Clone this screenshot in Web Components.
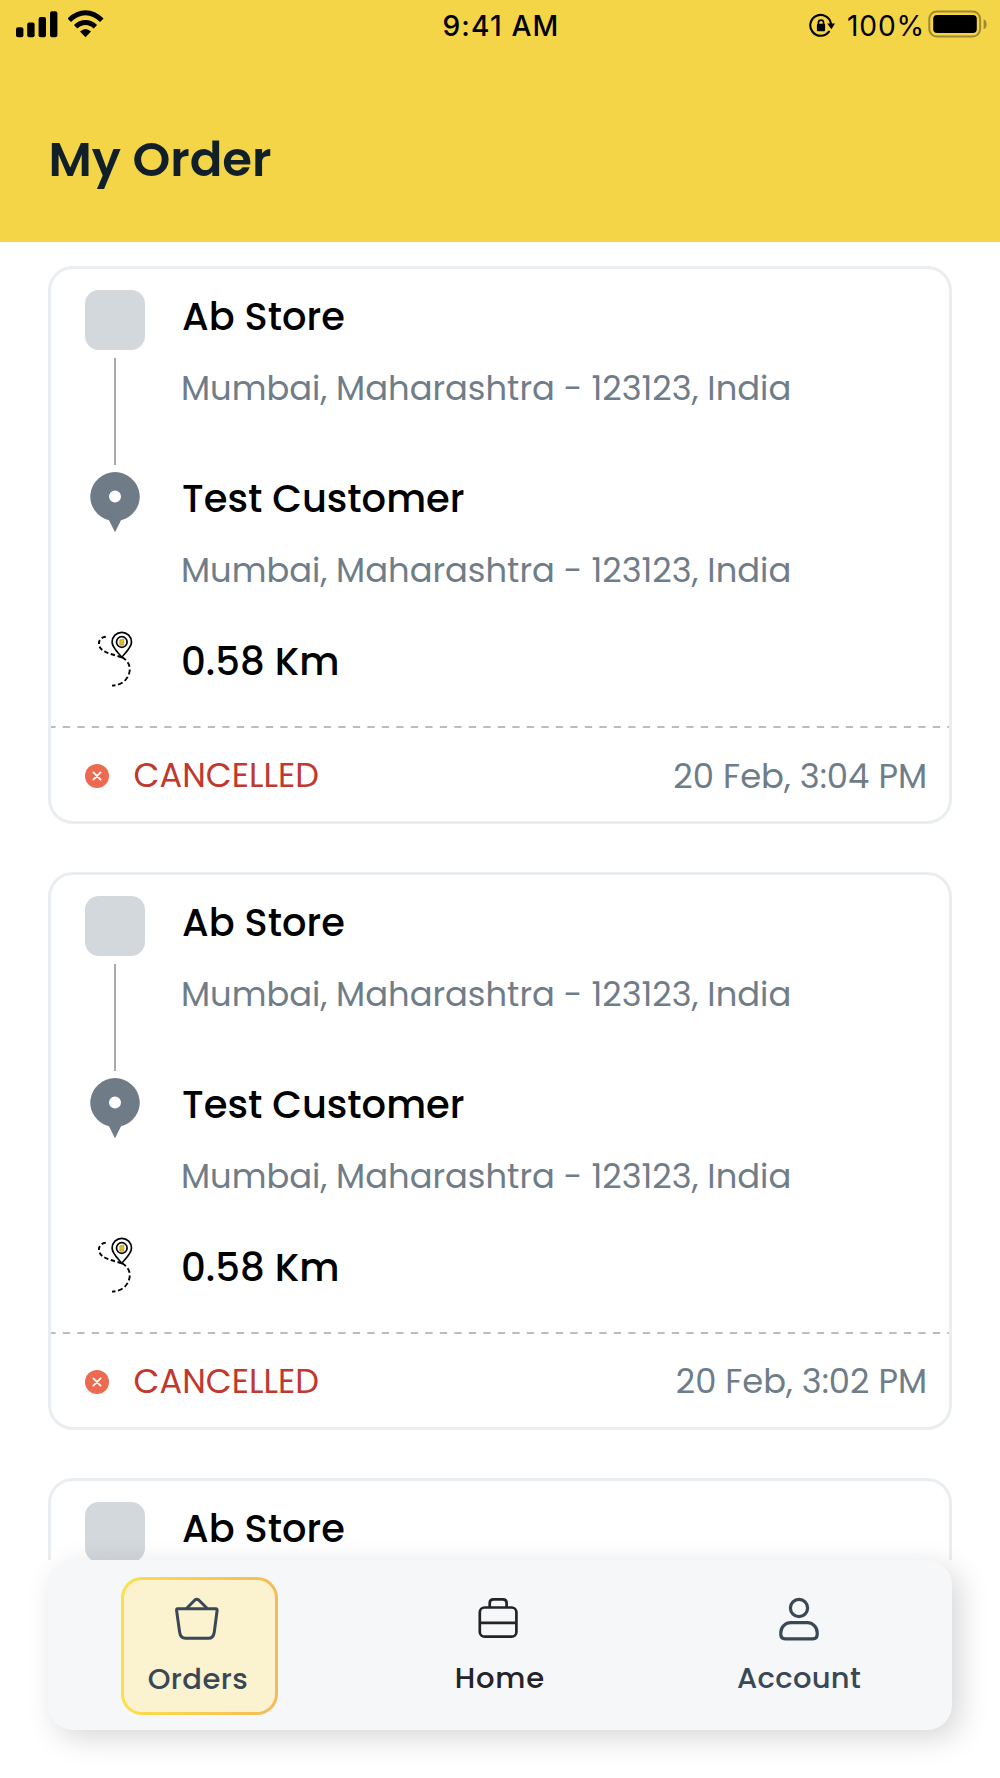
<!DOCTYPE html>
<html lang="en">
<head>
<meta charset="utf-8">
<title>My Order</title>
<style>
html,body{margin:0;padding:0;background:#fff}
body{width:1000px;height:1778px;overflow:hidden;font-family:Poppins,Inter,"Liberation Sans",sans-serif}
</style>
</head>
<body>
<orders-screen></orders-screen>
<script>
const define = (name, html, setup) => {
  const tpl = document.createElement('template');
  tpl.innerHTML = html;
  customElements.define(name, class extends HTMLElement {
    connectedCallback() {
      if (this.shadowRoot) return;
      const root = this.attachShadow({ mode: 'open' });
      root.append(tpl.content.cloneNode(true));
      if (setup) setup(this, root);
    }
  });
};

/* One line of text whose ink spans the width in `w`: by font size, or by
   letter spacing when `track` is set. */
const ctx = document.createElement('canvas').getContext('2d');
define('fit-text', `
<style>:host{display:block;white-space:nowrap;width:max-content}span{display:block}</style>
<span></span>`, (host, root) => {
  const span = root.querySelector('span');
  const text = host.getAttribute('text');
  const target = parseFloat(host.getAttribute('w'));
  span.textContent = text;
  const cs = getComputedStyle(host);
  const size = parseFloat(cs.fontSize);
  const measure = s => {
    ctx.font = cs.fontWeight + ' ' + s + 'px ' + cs.fontFamily;
    const m = ctx.measureText(text);
    return { lsb: -m.actualBoundingBoxLeft, rsb: m.width - m.actualBoundingBoxRight,
      ink: m.actualBoundingBoxRight + m.actualBoundingBoxLeft };
  };
  let m = measure(size), ls = 0;
  if (host.hasAttribute('track')) {
    ls = (target - m.ink) / (text.length - 1);
    span.style.letterSpacing = ls.toFixed(3) + 'px';
  } else {
    const s = size * target / m.ink;
    span.style.fontSize = s.toFixed(2) + 'px';
    m = measure(s);
  }
  span.style.marginLeft = (-m.lsb).toFixed(2) + 'px';
  span.style.marginRight = (-m.rsb - ls).toFixed(2) + 'px';
});

define('status-bar', `
<style>
:host{display:grid;grid-template-columns:1fr auto 1fr;height:50px;color:#000;font-family:Inter,"Liberation Sans",sans-serif}
.l{display:flex;gap:10px;padding:10px 0 0 16px}
.r{display:flex;justify-content:flex-end;padding-right:13px}
svg{display:block}
fit-text{line-height:40px;font-size:28.2px;padding-top:6px}
.t{font-weight:500}
.p{font-weight:400;margin:0 6.5px 0 13.5px}
</style>
<div class="l">
<svg width="42" height="28" viewBox="0 0 42 28"><rect x="0" y="17.3" width="7.4" height="10" rx="2"/><rect x="11.2" y="12.5" width="7.4" height="14.8" rx="2"/><rect x="22.6" y="7" width="7.4" height="20.3" rx="2"/><rect x="34" y="1.3" width="7.4" height="26" rx="2"/></svg>
<svg width="38" height="28" viewBox="0 0 38 28"><path fill="none" stroke="#000" stroke-width="5" d="M1.2 10.3Q8.8 2.8 17.5 2.8T33.8 10.3"/><path fill="none" stroke="#000" stroke-width="4.8" d="M7.6 16.8Q12 12.5 17.5 12.5T27.4 16.8"/><path d="M12 21.5Q17.5 16.5 23 21.5L17.5 27.2Z"/></svg>
</div>
<fit-text class="t" track text="9:41 AM" w="113"></fit-text>
<div class="r">
<svg style="margin-top:12px" width="26" height="27" viewBox="0 0 26 27"><path fill="none" stroke="#000" stroke-width="2.1" stroke-linecap="round" d="M22 12A10.4 10.4 0 1 0 20 19.6"/><path d="M18.2 11.5h7.8L22.4 17.2Z"/><rect x="7.9" y="11.8" width="8.2" height="7.4" rx="1"/><path fill="none" stroke="#000" stroke-width="1.6" d="M9.4 12V10.7a2.6 2.6 0 0 1 5.2 0V12"/></svg>
<fit-text class="p" track text="100%" w="73.5"></fit-text>
<svg style="margin-top:10px" width="59" height="28" viewBox="0 0 59 28"><rect x="1.3" y="1.4" width="50.8" height="25.2" rx="7.5" fill="none" stroke="#9d8930" stroke-width="2"/><rect x="5.2" y="5" width="43.6" height="18" rx="4"/><path fill="#9d8930" d="M55.6 9.3q3 1.2 3 5t-3 5Z"/></svg>
</div>`);

define('app-header', `
<style>
:host{display:block;height:241.5px;background:#f4d548}
fit-text{margin:76px 0 0 51.5px;font-size:47px;line-height:66px;font-weight:600;color:#101f28}
</style>
<status-bar></status-bar>
<fit-text text="My Order" w="219"></fit-text>`);

define('order-card', `
<style>
:host{display:block;box-sizing:border-box;width:904px;height:558px;border:3px solid #eaeef1;border-radius:25px;background:#fff;flex:none}
.stops{display:grid;grid-template-columns:60px 1fr;column-gap:38px;padding:21px 0 0 34px}
.rail{display:flex;flex-direction:column;align-items:center;height:398px}
.text{padding-top:.3px}
.box{width:60px;height:60px;border-radius:14px;background:#d2d8dc;flex:none}
.line{width:2px;height:107px;background:#aaa;margin:7.5px 0;flex:none}
svg{display:block;flex:none}
.pin{margin-left:-1px}
.name{font-size:38px;line-height:54px;font-weight:500;color:#000}
.addr{font-size:34px;line-height:48px;font-weight:400;color:#6f7d89;margin:20.5px 0 59.4px}
.addr.z{margin-bottom:40.8px}
.sep{margin-top:36.4px}
:host([peek]) .line,:host([peek]) .rail svg,:host([peek]) .sep,:host([peek]) footer{display:none}
footer{display:flex;align-items:center;height:48px;padding:24px 24px 0 33.6px;font-size:34px;line-height:48px}
.st{color:#c0392f;margin-left:26px}
.dt{color:#6f7d89;margin-left:auto}
</style>
<div class="stops">
 <div class="rail"><div class="box"></div><div class="line"></div>
 <svg class="pin" width="52" height="62" viewBox="0 0 52 62"><path fill="#6f7b87" fill-rule="evenodd" d="M26 0A25.5 24.6 0 0 0 20 48.3L26 60.2L32 48.3A25.5 24.6 0 0 0 26 0ZM26 18.6a6 6 0 1 1 0 12a6 6 0 1 1 0-12Z"/></svg>
 <svg style="margin-top:97.4px" width="40" height="58" viewBox="0 0 40 58" fill="none" stroke="#000" stroke-width="1.7"><path d="M26.8 26.2C23 21.5 17.1 16.5 17.1 11A9.7 9.7 0 0 1 36.5 11C36.5 16.5 30.6 21.5 26.8 26.2Z"/><circle cx="26.8" cy="11" r="5.3" fill="#fff"/><path fill="#e5bc20" stroke="#9f8b3c" stroke-width=".6" d="M24.8 8.9l4-1v6.3h-4Z"/><path stroke-width="1.9" stroke-dasharray="4.3 2.6" d="M10.8 5.8C5.5 6.2 3 10 4.2 14.5C6 21.5 18 23.5 26.8 26.2"/><path stroke-width="1.9" stroke-dasharray="5 2.7" d="M26.8 26.2C33.5 29.5 36 36 34.2 42C32 50 25.5 54.5 17 54.6"/></svg>
 </div>
 <div class="text">
 <fit-text class="name" text="Ab Store" w="161.3"></fit-text>
 <div class="rest"></div>
 </div>
</div>
<svg class="sep" width="898" height="2" viewBox="0 0 898 2"><path d="M0 1H898" stroke="#bcbcbc" stroke-width="2" stroke-dasharray="7.3 7.2" stroke-dashoffset="2.7"/></svg>
<footer>
<svg width="24" height="24" viewBox="0 0 24 24"><circle cx="12" cy="12" r="12" fill="#ec6a50"/><path d="M8.4 8.4l7.2 7.2M15.6 8.4l-7.2 7.2" stroke="#fff" stroke-width="1.8" stroke-linecap="round"/></svg>
</footer>`, (host, root) => {
  if (host.hasAttribute('peek')) return;
  root.querySelector('.rest').outerHTML = `
 <fit-text class="addr" text="Mumbai, Maharashtra - 123123, India" w="606.5"></fit-text>
 <fit-text class="name" text="Test Customer" w="281"></fit-text>
 <fit-text class="addr z" text="Mumbai, Maharashtra - 123123, India" w="606.5"></fit-text>
 <fit-text class="name" text="0.58 Km" w="154"></fit-text>`;
  root.querySelector('footer').insertAdjacentHTML('beforeend', `
 <fit-text class="st" text="CANCELLED" w="183.5"></fit-text>
 <fit-text class="dt" text="${host.getAttribute('date')}" w="${host.getAttribute('date-width')}"></fit-text>`);
});

define('nav-item', `
<style>
:host{display:flex;flex-direction:column;align-items:center;box-sizing:border-box;width:157px;height:138px;border:3px solid transparent;border-radius:21px;padding-top:16.4px;color:#3a4856}
:host([active]){background:linear-gradient(#fbf2cf,#fbf2cf) padding-box,linear-gradient(90deg,#fbe04a,#f3bb58) border-box}
:host([dark]){color:#252328}
fit-text{font-size:29px;line-height:42px;font-weight:500}
div{margin-top:16.2px}
:host([active]) div{margin:17.2px 3px 0 0}
:host([dark]) div{margin-left:1px}
:host(:last-of-type) div{margin-right:2px}
</style>
<slot></slot>
<div></div>`, (host, root) => {
  root.querySelector('div').innerHTML = `<fit-text track text="${host.getAttribute('label')}" w="${host.getAttribute('w')}"></fit-text>`;
});

define('tab-bar', `
<style>
:host{display:flex;justify-content:space-between;box-sizing:border-box;width:904px;height:169.5px;padding:16.5px 74px 0 73px;border-radius:25px;background:#f6f7f9;box-shadow:8px 8px 30px rgba(0,0,0,.16)}
svg{display:block;fill:none;stroke:currentColor}
</style>
<nav-item active label="Orders" w="98.7"><svg width="46" height="45" viewBox="0 0 46 45" stroke-width="3" stroke-linejoin="round" style="margin-right:6px"><path d="M3.5 12.8H42Q43.3 12.8 43.1 14.5L40.3 36Q39.4 42.3 34.5 42.3H11.5Q6.5 42.3 5.6 36L2.6 14.5Q2.4 12.8 3.5 12.8Z"/><path d="M12.5 12.5L20.9 4Q22.8 2.4 24.7 4L33.3 12.5"/></svg></nav-item>
<nav-item dark label="Home" w="86.5"><svg width="42" height="45" viewBox="0 0 42 45" stroke-width="2.7" style="margin-right:2.4px"><rect x="2.8" y="11.5" width="36.6" height="29.2" rx="4.8"/><path d="M2.8 26.9H39.4M12.7 11.5V7Q12.7 3.3 16.5 3.3H25.8Q29.6 3.3 29.6 7V11.5"/></svg></nav-item>
<nav-item label="Account" w="123"><svg width="42" height="45" viewBox="0 0 42 45" stroke-width="3.2" style="margin-right:2px"><circle cx="21" cy="12" r="8.6"/><path d="M12.8 26.6H29.2A10 10 0 0 1 39.2 36.6V38.2Q39.2 42.8 34.8 42.8H7.2Q2.8 42.8 2.8 38.2V36.6A10 10 0 0 1 12.8 26.6Z"/></svg></nav-item>`);

define('orders-screen', `
<style>
:host{display:flex;flex-direction:column;width:1000px;height:1778px;background:#fff}
.list{display:flex;flex-direction:column;gap:48px;box-sizing:border-box;height:1318.5px;padding:24.5px 0 0 48px;overflow:hidden}
tab-bar{margin-left:48px;position:relative}
</style>
<app-header></app-header>
<div class="list">
<order-card date="20 Feb, 3:04 PM" date-width="250.5"></order-card>
<order-card date="20 Feb, 3:02 PM" date-width="248"></order-card>
<order-card peek></order-card>
</div>
<tab-bar></tab-bar>`);
</script>
</body>
</html>
